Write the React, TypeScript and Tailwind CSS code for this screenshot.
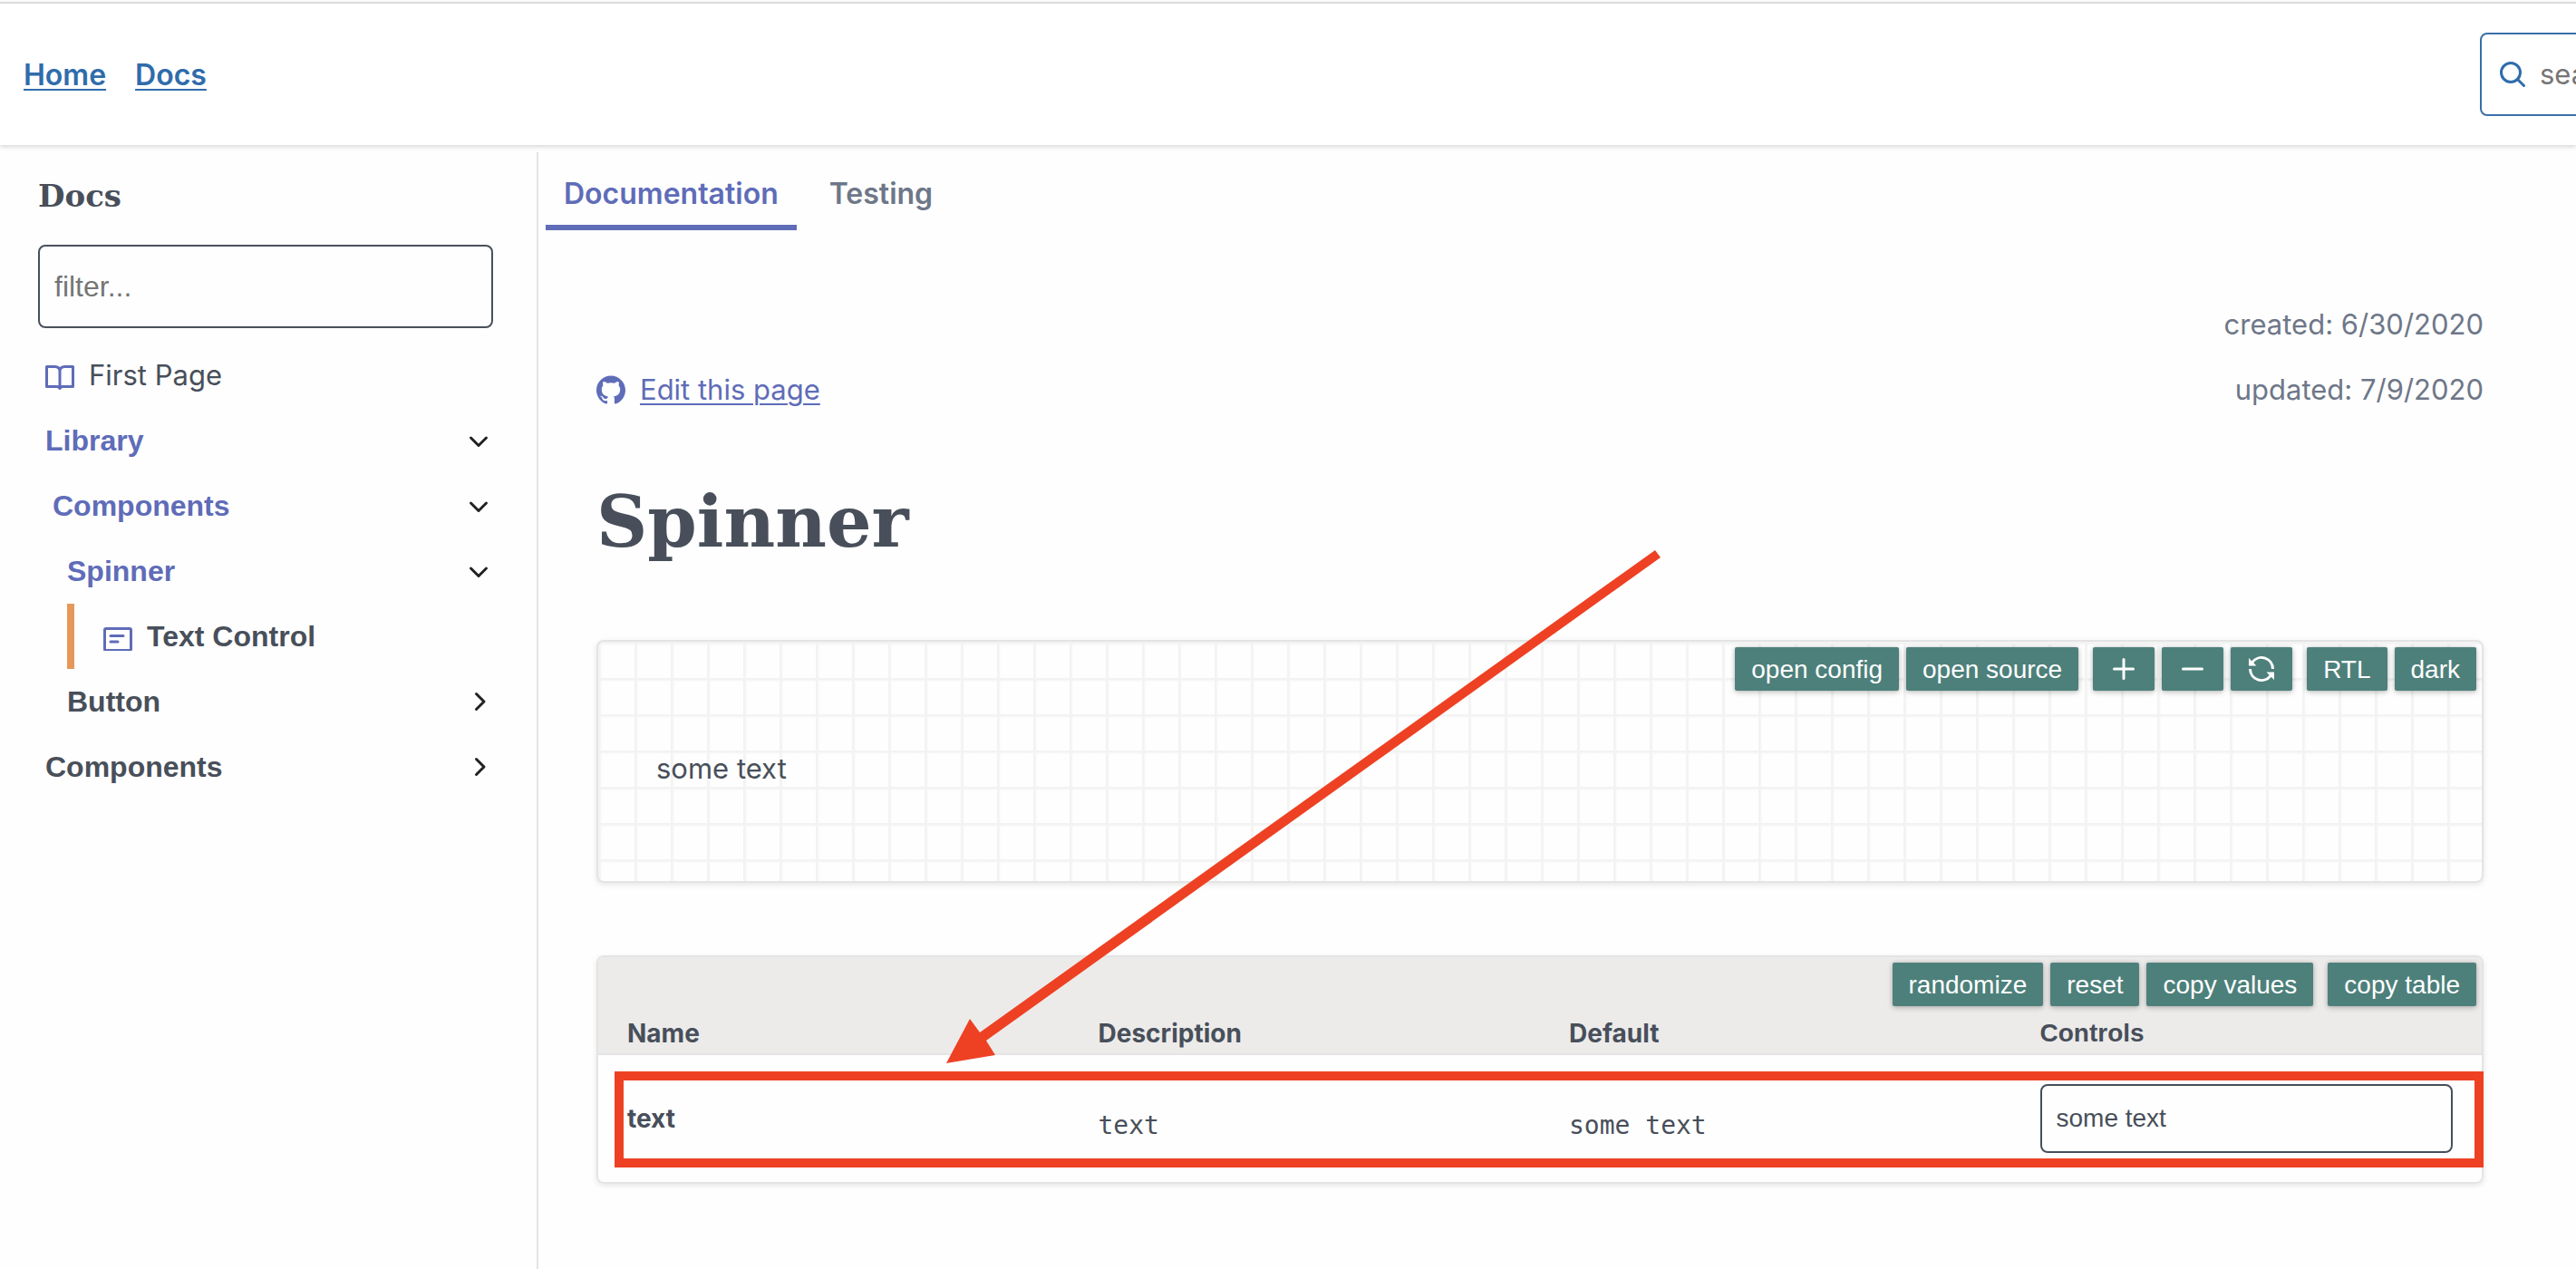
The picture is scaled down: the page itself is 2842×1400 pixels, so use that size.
import type { ReactNode } from "react";
import { SiGithub } from "react-icons/si";

const sans = "font-['Liberation_Sans',Arial,sans-serif]";
const inter = "font-['Inter',sans-serif]";
const serif = "font-['DejaVu_Serif',Georgia,serif]";

function Chevron({ open }: { open: boolean }) {
  return (
    <svg viewBox="0 0 32 32" className="size-8 flex-none" fill="none" stroke="#222" strokeWidth="3" strokeLinecap="round" strokeLinejoin="round" aria-hidden="true">
      <path d={open ? "M7.500 13l8.500 8.500 8.500-8.500" : "M13.500 7.500l8.500 8.500-8.500 8.500"} />
    </svg>
  );
}

function Group({ label, open = false, indent }: { label: string; open?: boolean; indent: string }) {
  return (
    <button type="button" aria-expanded={open} className={`flex w-full items-center justify-between text-left font-bold leading-[72px] ${indent} ${open ? "text-[#5f6cb8]" : ""}`}>
      {label}
      <Chevron open={open} />
    </button>
  );
}

function ToolButton({ children, label }: { children: ReactNode; label?: string }) {
  return (
    <button type="button" aria-label={label} className="flex h-12 items-center rounded-xs bg-[#4d807b] px-[18px] pt-0.5 text-[28px] leading-none whitespace-nowrap text-white shadow-[0_2px_6px_rgba(0,0,0,0.2),0_0_4px_rgba(0,0,0,0.15)]">
      {children}
    </button>
  );
}

export default function App() {
  return (
    <div className={`flex min-h-screen flex-col bg-[#fefefe] text-[32px] text-[#484f5a] ${sans}`}>
      <header className="relative z-10 mt-0.5 flex items-center justify-between overflow-x-clip border-t-2 border-[#dcdcdc] bg-white py-8 pl-[26px] shadow-[0_2px_6px_rgba(0,0,0,0.1),0_2px_4px_rgba(0,0,0,0.06)]">
        <nav className={`flex gap-8 pt-0.5 font-semibold text-[#2f6cab] ${inter}`}>
          <a href="#home" className="underline decoration-2 underline-offset-4">Home</a>
          <a href="#docs" className="underline decoration-2 underline-offset-4">Docs</a>
        </nav>
        <label className="-mr-[300px] flex h-[92px] w-[406px] flex-none items-center gap-4 rounded-lg border-2 border-[#396fa9] pl-5">
          <svg viewBox="0 0 28 28" className="size-7 flex-none" fill="none" stroke="#2f6cab" strokeWidth="3" strokeLinecap="round" aria-hidden="true">
            <circle cx="12" cy="12" r="10.5" />
            <path d="M19.5 19.5l7 7" />
          </svg>
          <input type="search" placeholder="search..." aria-label="Search" className={`min-w-0 flex-1 bg-transparent text-[31px] outline-none placeholder:text-[#757575] ${inter}`} />
        </label>
      </header>

      <div className="flex flex-1 pt-2">
        <aside className="w-[594px] flex-none border-r-2 border-[#e4e4e4] pr-12 pl-[42px]">
          <h2 className={`pt-6 pb-[30px] text-[34px] leading-[48px] font-bold ${serif}`}>Docs</h2>
          <input type="text" placeholder="filter..." aria-label="Filter pages" className="h-[92px] w-full rounded-lg border-2 border-[#4a505a] px-4 outline-none placeholder:text-[#757575]" />
          <nav className="mt-4">
            <a href="#first" className={`flex items-center gap-4 pl-2 text-[31px] leading-[72px] ${inter}`}>
              <svg viewBox="0 0 32 32" className="size-8 flex-none" fill="none" stroke="#5f6cb8" strokeWidth="3" strokeLinejoin="round" aria-hidden="true">
                <path d="M1.500 6.500h9q5.500 0 5.500 5q0-5 5.500-5h9v22h-11q-2.500 0-3.500 2q-1-2-3.500-2h-11zM16 11v18" />
              </svg>
              First Page
            </a>
            <Group label="Library" open indent="pl-2" />
            <Group label="Components" open indent="pl-4" />
            <Group label="Spinner" open indent="pl-8" />
            <a href="#text" aria-current="page" className="ml-8 flex items-center gap-4 border-l-8 border-[#e6985a] pl-8 leading-[72px] font-bold">
              <svg viewBox="0 0 32 32" className="size-8 flex-none" fill="none" stroke="#5f6cb8" strokeWidth="3" strokeLinecap="round" aria-hidden="true">
                <rect x="1.500" y="7.500" width="29" height="24" rx="1.500" />
                <path d="M8 15.500h14M8 22h8" />
              </svg>
              Text Control
            </a>
            <Group label="Button" indent="pl-8" />
            <Group label="Components" indent="pl-2" />
          </nav>
        </aside>

        <main className="min-w-0 flex-1 pt-3">
          <div role="tablist" className={`flex gap-4 pl-2 leading-[68px] font-semibold ${inter}`}>
            <button type="button" role="tab" aria-selected="true" className="border-b-[6px] border-[#5f6cb8] px-5 text-[#5f6cb8]">Documentation</button>
            <button type="button" role="tab" aria-selected="false" className="border-b-[6px] border-transparent px-5 text-[#6e7788]">Testing</button>
          </div>

          <div className="relative pt-[68px] pr-[102px] pl-16">
            <div className={`flex items-end justify-between text-[31px] leading-[72px] ${inter}`}>
              <a href="#edit" className="flex items-center gap-4 text-[#5f6cb8]">
                <SiGithub className="size-8" />
                <span className="underline decoration-2 underline-offset-4">Edit this page</span>
              </a>
              <p className="text-right text-[#6e7788]">
                created: 6/30/2020
                <br />
                updated: 7/9/2020
              </p>
            </div>

            <h1 className={`mt-[62px] mb-[82px] text-[78px] leading-[96px] font-bold ${serif}`}>Spinner</h1>

            <section className="relative rounded-lg border-2 border-[#e4e4e4] bg-[linear-gradient(#f3f3f3_2px,transparent_4px),linear-gradient(90deg,#f3f3f3_2px,transparent_4px)] bg-[size:40px_40px] px-16 pt-26 pb-22 shadow-[0_2px_6px_rgba(0,0,0,0.1)]">
              <div className="absolute top-1.5 right-1.5 flex gap-4">
                <div className="flex gap-2">
                  <ToolButton>open config</ToolButton>
                  <ToolButton>open source</ToolButton>
                </div>
                <div className="flex gap-2">
                  <ToolButton label="zoom in">
                    <svg viewBox="0 0 32 32" className="size-8" stroke="currentColor" strokeWidth="3" strokeLinecap="round" aria-hidden="true"><path d="M5.500 15h21M16 4.500v21" /></svg>
                  </ToolButton>
                  <ToolButton label="zoom out">
                    <svg viewBox="0 0 32 32" className="size-8" stroke="currentColor" strokeWidth="3" strokeLinecap="round" aria-hidden="true"><path d="M5.500 15h21" /></svg>
                  </ToolButton>
                  <ToolButton label="reset">
                    <svg viewBox="0 0 32 32" className="size-8" fill="none" stroke="currentColor" strokeWidth="3" aria-hidden="true">
                      <path d="M6 7.500A12.500 12.500 0 0 1 28.500 15M26 22.500A12.500 12.500 0 0 1 3.500 15" />
                      <path d="M2 3v8.500h8.500zM30 27v-8.500h-8.500z" fill="currentColor" stroke="none" />
                    </svg>
                  </ToolButton>
                </div>
                <div className="flex gap-2">
                  <ToolButton>RTL</ToolButton>
                  <ToolButton>dark</ToolButton>
                </div>
              </div>
              <p className={`text-[31px] leading-[72px] ${inter}`}>some text</p>
            </section>

            <section className="relative mt-20 rounded-lg border-2 border-[#e4e4e4] text-[28px] shadow-[0_2px_6px_rgba(0,0,0,0.1)]">
              <div className="flex justify-end gap-4 rounded-t-md bg-[#ecebea] pt-1.5 pr-1.5">
                <div className="flex gap-2">
                  <ToolButton>randomize</ToolButton>
                  <ToolButton>reset</ToolButton>
                  <ToolButton>copy values</ToolButton>
                </div>
                <ToolButton>copy table</ToolButton>
              </div>
              <table className="w-full table-fixed border-collapse text-left">
                <thead>
                  <tr className="border-b-2 border-[#e4e4e6] bg-[#ecebea] leading-[36px] font-bold">
                    <th className={`pt-3 pb-1 pl-8 ${inter}`}>Name</th>
                    <th className={`pt-3 pb-1 pl-8 ${inter}`}>Description</th>
                    <th className={`pt-3 pb-1 pl-8 ${inter}`}>Default</th>
                    <th className="pt-3 pb-1 pl-8">Controls</th>
                  </tr>
                </thead>
                <tbody>
                  <tr>
                    <th scope="row" className={`py-8 pl-8 font-bold ${inter}`}>text</th>
                    <td className="pt-4 pl-8 font-['DejaVu_Sans_Mono',monospace]">text</td>
                    <td className="pt-4 pl-8 font-['DejaVu_Sans_Mono',monospace]">some text</td>
                    <td className="px-8 py-8">
                      <input type="text" defaultValue="some text" aria-label="text" className="block h-[76px] w-full rounded-lg border-2 border-[#484f5a] px-4 outline-none" />
                    </td>
                  </tr>
                </tbody>
              </table>
              <div className="pointer-events-none absolute -right-0.5 bottom-4 left-[18px] h-[106px] border-[10px] border-[#ee4124]" />
            </section>

            <svg viewBox="0 0 788 568" className="pointer-events-none absolute top-[353px] left-[450px] h-[568px] w-[788px]" fill="#ee4124" aria-hidden="true">
              <path d="M0 566l26-49 11 15L782 0l6 8L44 541l10 16z" />
            </svg>
          </div>
        </main>
      </div>
    </div>
  );
}
